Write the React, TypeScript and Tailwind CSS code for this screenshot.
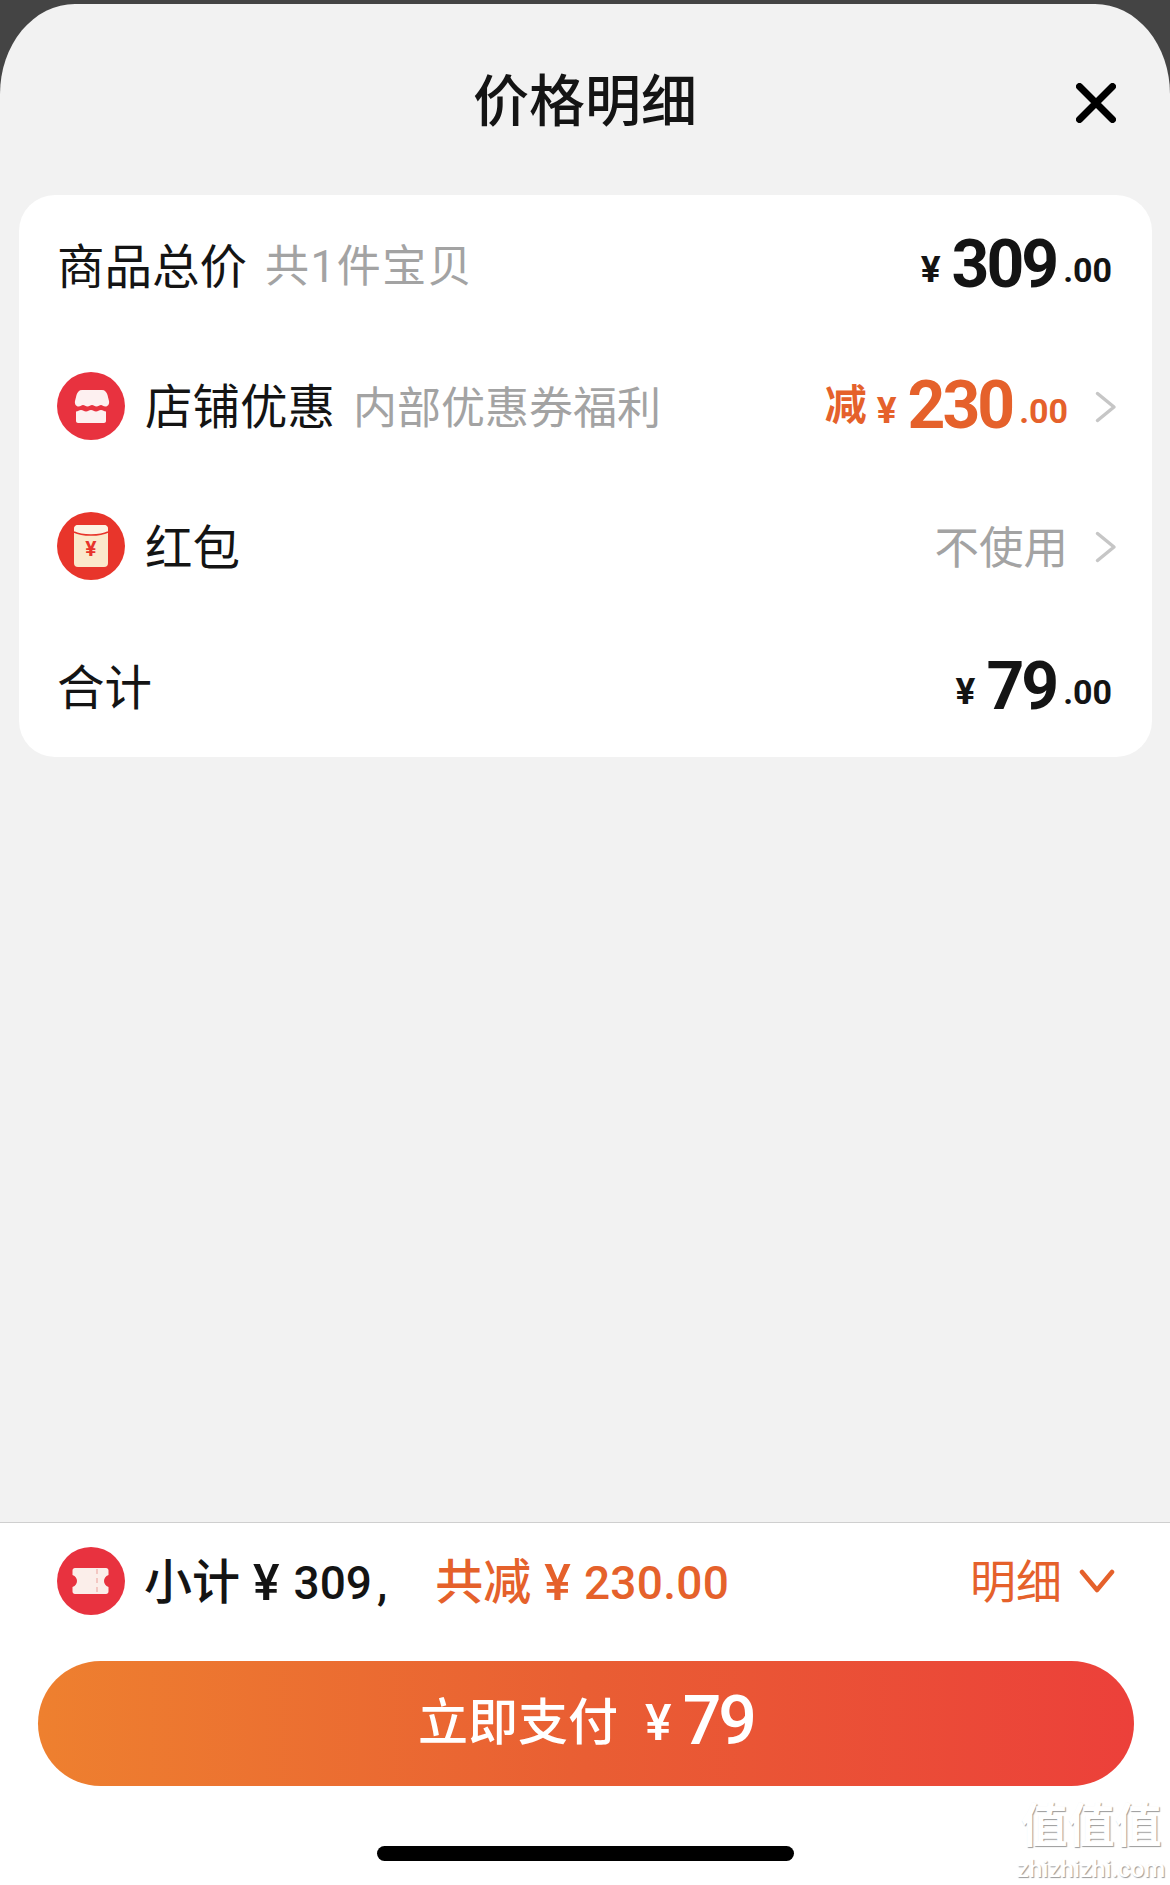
// 价格明细 bottom sheet
function StoreIcon() {
  return (
    <svg width="68" height="68" viewBox="0 0 68 68" className="shrink-0">
      <circle cx="34" cy="34" r="34" fill="#e8323f" />
      <path
        d="M23 18h22c3 0 4.500 2 5.500 5l1.500 6c.6 3-1 5.500-3.500 5.500-2.300 0-3.200-1.600-4.500-1.600s-2.700 1.600-4.500 1.600-3-1.600-4.500-1.600-2.700 1.600-4.500 1.600-3-1.600-4.500-1.600-2.200 1.600-4.500 1.600c-2.500 0-4.100-2.500-3.500-5.500l1.500-6c1-3 2.500-5 5.500-5z"
        fill="#fdf0f0"
      />
      <path
        d="M19 39.500c2 0 3-1.500 5-1.500s3 1.500 5 1.500 3-1.500 5-1.500 3 1.500 5 1.500 3-1.500 5-1.500 3 1.500 5 1.500V49c0 1-1 2-2 2H21c-1 0-2-1-2-2z"
        fill="#fdf0f0"
      />
    </svg>
  );
}

function EnvelopeIcon() {
  return (
    <svg width="68" height="68" viewBox="0 0 68 68" className="shrink-0">
      <circle cx="34" cy="34" r="34" fill="#e8352b" />
      <rect x="17" y="13" width="34" height="42" rx="4" fill="#fbe9cb" />
      <path d="M17 20c8 4 26 4 34 0v-3c0-2-2-4-4-4H21c-2 0-4 2-4 4z" fill="#fdf3e4" />
      <path d="M17 20c8 4 26 4 34 0" fill="none" stroke="#e8352b" strokeWidth="1.500" />
      <text x="34" y="44" textAnchor="middle" fontSize="21" fontWeight="700" fontFamily="Roboto" fill="#e8352b">
        ¥
      </text>
    </svg>
  );
}

function TicketIcon() {
  return (
    <svg width="68" height="68" viewBox="0 0 68 68" className="shrink-0">
      <circle cx="34" cy="34" r="34" fill="#e8323f" />
      <path
        d="M18 21h31c1.500 0 2.500 1 2.500 2.500v4.500c-3 1-4.500 3.500-4.500 6s1.500 5 4.500 6v4.500c0 1.500-1 2.500-2.500 2.500H18c-1.500 0-2.500-1-2.500-2.500V40c3-1 4.500-3.500 4.500-6s-1.500-5-4.500-6v-4.500c0-1.500 1-2.500 2.500-2.500z"
        fill="#fbeeea"
      />
      <path d="M40 22v26" stroke="#f3c7c2" strokeWidth="2" strokeDasharray="5 4" />
    </svg>
  );
}

function Chevron() {
  return (
    <svg width="22" height="32" viewBox="0 0 22 32" fill="none" className="shrink-0">
      <path d="M2.500 2.500L19 16 2.500 29.500" stroke="#c6c6c6" strokeWidth="3.500" strokeLinecap="round" strokeLinejoin="round" />
    </svg>
  );
}

function Amount({ value, color }: { value: string; color: string }) {
  return (
    <span className={`flex items-baseline leading-none ${color}`}>
      <span className="text-[37px] font-bold mr-[11px] -translate-y-[5px]">¥</span>
      <span className="text-[66px] font-bold tracking-[-3px]">{value}</span>
      <span className="text-[34px] font-bold ml-[7px] -translate-y-[5px]">.00</span>
    </span>
  );
}

export default function App() {
  return (
    <div className="w-[1170px] h-[1885px] bg-[#444444] pt-1 flex flex-col font-['Roboto','Noto_Sans_CJK_SC',sans-serif] text-[#141414]">
      <div className="flex-1 bg-[#f2f2f2] rounded-t-[75px_90px] flex flex-col overflow-hidden">
        <div className="h-[191px] shrink-0 grid grid-cols-[1fr_auto_1fr] items-center">
          <div />
          <h1 className="text-[56px] font-medium leading-none pt-[5px]">价格明细</h1>
          <div className="flex justify-end pr-[54px] pt-[7px]">
            <svg width="40" height="40" viewBox="0 0 40 40" fill="none">
              <path d="M3.500 3.500l33 33M36.500 3.500l-33 33" stroke="#000" strokeWidth="7" strokeLinecap="round" />
            </svg>
          </div>
        </div>

        <div className="ml-[19px] mr-[18px] h-[562px] bg-white rounded-[36px] flex flex-col text-[47.500px]">
          <div className="flex-1 flex items-center justify-between pl-[38px] pr-[40px]">
            <div className="flex items-center">
              <span className="pt-[6px]">商品总价</span>
              <span className="ml-[18px] pt-[4px] text-[44px] tracking-[1.500px] text-[#a3a3a3]">共1件宝贝</span>
            </div>
            <Amount value="309" color="text-[#141414]" />
          </div>

          <div className="flex-1 flex items-center justify-between pl-[38px] pr-[35px]">
            <div className="flex items-center">
              <StoreIcon />
              <span className="ml-[20px] pt-[6px]">店铺优惠</span>
              <span className="ml-[18px] pt-[6px] text-[44px] text-[#a3a3a3]">内部优惠券福利</span>
            </div>
            <div className="flex items-center">
              <span className="text-[42px] font-bold text-[#e5612b] mr-[10px]">减</span>
              <Amount value="230" color="text-[#e5612b]" />
              <span className="ml-[27px] pt-[2px]">
                <Chevron />
              </span>
            </div>
          </div>

          <div className="flex-1 flex items-center justify-between pl-[38px] pr-[35px]">
            <div className="flex items-center">
              <EnvelopeIcon />
              <span className="ml-[20px] pt-[6px]">红包</span>
            </div>
            <div className="flex items-center">
              <span className="text-[44.500px] text-[#a3a3a3] pt-[6px]">不使用</span>
              <span className="ml-[27px] pt-[2px]">
                <Chevron />
              </span>
            </div>
          </div>

          <div className="flex-1 flex items-center justify-between pl-[38px] pr-[40px]">
            <span className="pt-[6px]">合计</span>
            <Amount value="79" color="text-[#141414]" />
          </div>
        </div>

        <div className="mt-auto h-[363px] shrink-0 bg-white border-t border-[#cfcfcf] relative">
          <div className="h-[116px] mb-[22px] flex items-center justify-between pl-[57px] pr-[54px]">
            <div className="flex items-center">
              <TicketIcon />
              <span className="ml-[19px] pt-[4px] text-[48px] font-medium">小计</span>
              <span className="ml-[13px] pt-[4px] text-[50px] font-medium">¥</span>
              <span className="ml-[14px] pt-[4px] text-[46px] font-medium">309</span>
              <span className="ml-[5px] pt-[4px] text-[46px] font-medium">,</span>
              <span className="ml-[48px] pt-[4px] text-[48px] font-medium text-[#e5612b]">共减</span>
              <span className="ml-[13px] pt-[4px] text-[50px] font-medium text-[#e5612b]">¥</span>
              <span className="ml-[13px] pt-[4px] text-[46px] font-medium tracking-[0.300px] text-[#e5612b]">230.00</span>
            </div>
            <div className="flex items-center text-[#e5612b]">
              <span className="text-[46px] pt-[2px]">明细</span>
              <svg width="36" height="24" viewBox="0 0 36 24" fill="none" className="ml-[17px] mr-[1px]">
                <path d="M3 3l15 18L33 3" stroke="#e5612b" strokeWidth="4.500" strokeLinecap="round" strokeLinejoin="round" />
              </svg>
            </div>
          </div>

          <button className="mx-[38px] w-[1096px] h-[125px] rounded-full bg-linear-to-r/srgb from-[#ee802f] via-[#e95e33] to-[#ec403a] text-white flex items-center justify-center">
            <span className="text-[50px] font-medium">立即支付</span>
            <span className="ml-[27px] text-[50px] font-medium">¥</span>
            <span className="ml-[11px] text-[68px] font-medium leading-none tracking-[-3px] -translate-y-[3px]">79</span>
          </button>

          <div className="mt-[60px] mx-auto w-[417px] h-[15px] rounded-full bg-black" />

          {/* watermark */}
          <div className="absolute left-[1018px] top-[279px] w-[146px] flex flex-col items-center whitespace-nowrap text-white leading-none [text-shadow:1px_1px_1px_#9a9a9a]">
            <span className="text-[47px] font-bold">值值值</span>
            <span className="mt-[8px] text-[24px] font-medium">zhizhizhi.com</span>
          </div>
        </div>
      </div>
    </div>
  );
}
